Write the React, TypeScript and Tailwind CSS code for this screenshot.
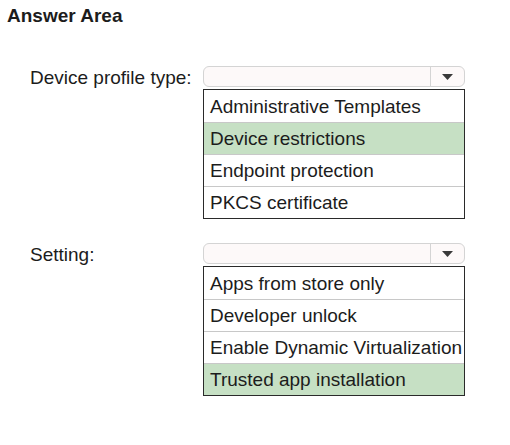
const profileTypes = [
  { label: 'Administrative Templates', selected: false },
  { label: 'Device restrictions', selected: true },
  { label: 'Endpoint protection', selected: false },
  { label: 'PKCS certificate', selected: false },
];

const settings = [
  { label: 'Apps from store only', selected: false },
  { label: 'Developer unlock', selected: false },
  { label: 'Enable Dynamic Virtualization', selected: false },
  { label: 'Trusted app installation', selected: true },
];

function Dropdown() {
  return (
    <div className="flex h-[21px] w-[262px] rounded-[6px] border border-[#d4d4d4] bg-[#fdf9f9]">
      <div className="flex-1" />
      <div className="flex w-[34px] items-center justify-center border-l border-[#d4d4d4]">
        <svg width="11" height="6" viewBox="0 0 11 6">
          <path d="M0 0 L11 0 L5.5 6 Z" fill="#3a3a3a" />
        </svg>
      </div>
    </div>
  );
}

function OptionList({ items }: { items: { label: string; selected: boolean }[] }) {
  return (
    <div className="w-[262px] border border-[#2a2a2a] bg-white">
      {items.map((item, i) => (
        <div
          key={item.label}
          className={`flex h-[32px] items-center pl-[6px] whitespace-nowrap ${
            i > 0 ? 'border-t border-[#c8c8c8]' : ''
          } ${item.selected ? 'bg-[#c6e0c4]' : ''}`}
        >
          {item.label}
        </div>
      ))}
    </div>
  );
}

function Question({ label, items }: { label: string; items: { label: string; selected: boolean }[] }) {
  return (
    <div className="flex">
      <div className="w-[203px] pl-[30px] h-[21px] flex items-center pt-[2px] whitespace-nowrap">{label}</div>
      <div className="flex flex-col gap-[2px]">
        <Dropdown />
        <OptionList items={items} />
      </div>
    </div>
  );
}

export default function App() {
  return (
    <div
      className="w-[510px] h-[445px] bg-white text-[#1c1c1c] text-[19px] leading-none"
      style={{ fontFamily: '"Liberation Sans", Arial, sans-serif' }}
    >
      <div className="pl-[7px] pt-[6px] font-bold text-[19px]">Answer Area</div>
      <div className="mt-[41px] flex flex-col gap-[24px]">
        <Question label="Device profile type:" items={profileTypes} />
        <Question label="Setting:" items={settings} />
      </div>
    </div>
  );
}
